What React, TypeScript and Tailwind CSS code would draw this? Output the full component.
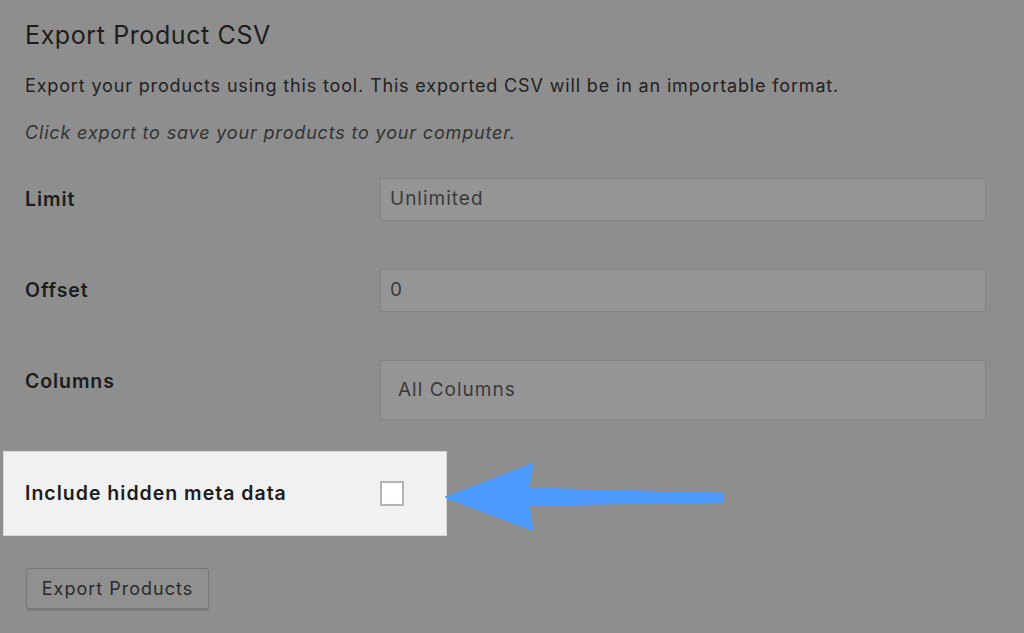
const font = "font-['Inter','Helvetica_Neue','Liberation_Sans',sans-serif]";

const Row = ({ label, value, tall }: { label: string; value: string; tall?: boolean }) => (
  <div className="flex items-start">
    <div className="w-[355px] pt-[9px] text-[19.5px] leading-[24px] font-semibold tracking-[0.9px] text-[#1c1c1c]">
      {label}
    </div>
    <div
      className={`w-[606px] border border-[#838383] bg-[#959595] text-[19px] tracking-[1px] text-[#3a3a3a] flex items-center ${
        tall ? 'h-[60px] pl-[17px]' : 'h-[43px] pl-[9px]'
      }`}
    >
      {value}
    </div>
  </div>
);

export default function App() {
  return (
    <div className={`relative min-h-screen w-full overflow-hidden bg-[#8e8e8e] ${font}`}>
      <div className="pl-[25px] pt-[20px] pb-[24px]">
        <h2 className="text-[25px] leading-[30px] tracking-[0.6px] text-[#1d1d1d]">Export Product CSV</h2>
        <p className="mt-[24px] text-[18px] leading-[24px] tracking-[0.85px] text-[#222]">
          Export your products using this tool. This exported CSV will be in an importable format.
        </p>
        <p className="mt-[23px] text-[18px] leading-[24px] italic tracking-[0.83px] text-[#333]">
          Click export to save your products to your computer.
        </p>

        <div className="mt-[33px] flex flex-col gap-[48px]">
          <Row label="Limit" value="Unlimited" />
          <Row label="Offset" value="0" />
          <Row label="Columns" value="All Columns" tall />
        </div>

        <div className="mt-[31px] -ml-[22px] flex h-[85px] w-[444px] items-center border border-[#d6d6d6] bg-[#f1f1f1] pl-[21px]">
          <span className="w-[355px] text-[19.5px] font-semibold tracking-[1px] text-[#1c1c1c]">
            Include hidden meta data
          </span>
          <span className="h-[25px] w-[24px] border-2 border-[#b1b5b9] bg-white" />
        </div>

        <button className="mt-[32px] ml-px h-[41px] w-[183px] rounded-[3px] border border-[#767676] bg-[#909090] text-[18px] tracking-[1px] text-[#2a2a2a] shadow-[0_2px_0_#7a7a7a]">
          Export Products
        </button>
      </div>

      <svg className="pointer-events-none absolute left-0 top-0" width="1024" height="633" viewBox="0 0 1024 633">
        <polygon
          points="445,497 533,463 529,488 723,493 723,502 529,505 533,530"
          fill="#4d9bff"
          stroke="#4d9bff"
          strokeWidth="1"
          strokeLinejoin="round"
        />
      </svg>
    </div>
  );
}
